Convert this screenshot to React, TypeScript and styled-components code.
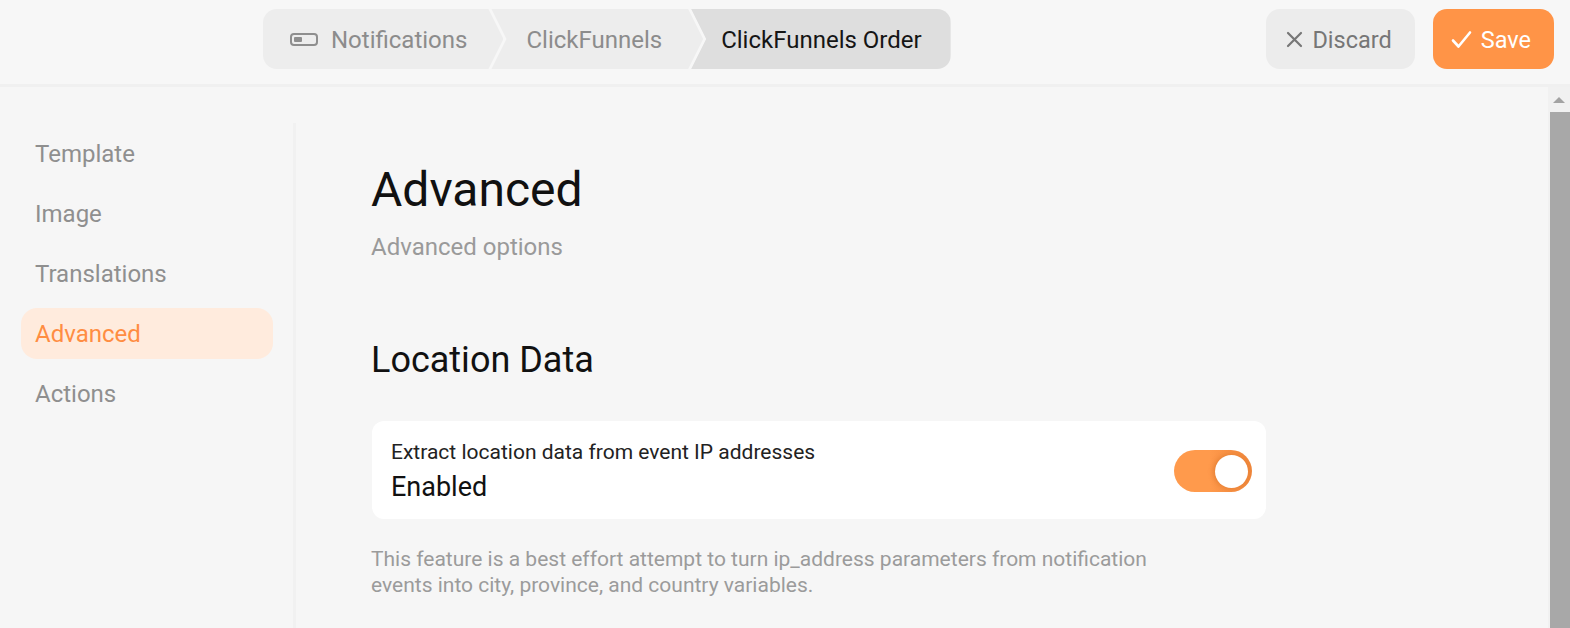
import React from "react";
import styled, { createGlobalStyle } from "styled-components";

const Global = createGlobalStyle`
  html, body { margin: 0; padding: 0; height: 100%; overflow: hidden; }
  body { background: #f6f6f6; font-family: Roboto, "Liberation Sans", sans-serif; color: #111; }
  #root { height: 100%; }
  * { box-sizing: border-box; }
`;

const Page = styled.div`
  display: flex;
  flex-direction: column;
  height: 100vh;
`;

const Header = styled.header`
  display: flex;
  align-items: flex-start;
  height: 87px;
  padding: 9px 16px 0 263px;
  background: #f7f7f7;
  border-bottom: 3px solid #f0f0f0;
  flex-shrink: 0;
`;

const Crumbs = styled.nav`
  display: flex;
  height: 60px;
  border-radius: 14px;
  overflow: hidden;
`;

const Crumb = styled.div<{ $first?: boolean; $last?: boolean; $active?: boolean; $pl: number; $pr: number }>`
  display: flex;
  align-items: center;
  gap: 13px;
  height: 60px;
  padding: 1px ${(p) => p.$pr}px 0 ${(p) => p.$pl}px;
  margin-left: ${(p) => (p.$first ? 0 : -12)}px;
  background: ${(p) => (p.$active ? "#dedede" : "#ededed")};
  color: ${(p) => (p.$active ? "#151515" : "#8c8c8c")};
  font-size: 24px;
  white-space: nowrap;
  clip-path: ${(p) =>
    p.$first
      ? "polygon(0 0, calc(100% - 15px) 0, 100% 50%, calc(100% - 15px) 100%, 0 100%)"
      : p.$last
      ? "polygon(0 0, 100% 0, 100% 100%, 0 100%, 15px 50%)"
      : "polygon(0 0, calc(100% - 15px) 0, 100% 50%, calc(100% - 15px) 100%, 0 100%, 15px 50%)"};
`;

const ToggleIcon = styled.span`
  position: relative;
  display: inline-block;
  width: 28px;
  height: 13px;
  border: 2px solid #8e8e8e;
  border-radius: 4px;
  &::after {
    content: "";
    position: absolute;
    left: 2px;
    top: 2px;
    width: 8px;
    height: 5px;
    background: #8e8e8e;
    border-radius: 1px;
  }
`;

const Actions = styled.div`
  margin-left: auto;
  display: flex;
  gap: 18px;
`;

const Button = styled.button<{ $primary?: boolean }>`
  display: flex;
  align-items: center;
  gap: 9px;
  height: 60px;
  padding: 1px ${(p) => (p.$primary ? 23 : 23)}px 0 ${(p) => (p.$primary ? 18 : 20)}px;
  border: none;
  border-radius: 14px;
  background: ${(p) => (p.$primary ? "#ff9447" : "#ececec")};
  color: ${(p) => (p.$primary ? "#fff" : "#767676")};
  font-family: Roboto, "Liberation Sans", sans-serif;
  font-size: 23.5px;
  cursor: pointer;
`;

const Body = styled.div`
  flex: 1;
  display: flex;
  min-height: 0;
`;

const Sidebar = styled.aside`
  width: 296px;
  flex-shrink: 0;
  margin-top: 36px;
  padding: 5px 20px 0 21px;
  border-right: 3px solid #f1f1f1;
  display: flex;
  flex-direction: column;
  gap: 9px;
`;

const NavItem = styled.div<{ $active?: boolean }>`
  height: 51px;
  line-height: 53px;
  padding-left: 14px;
  border-radius: 16px;
  font-size: 24px;
  color: ${(p) => (p.$active ? "#ff8d42" : "#8f8f8f")};
  background: ${(p) => (p.$active ? "#ffebdd" : "transparent")};
`;

const Content = styled.main`
  flex: 1;
  padding: 74px 0 0 75px;
  min-width: 0;
`;

const Title = styled.h1`
  margin: 0;
  font-size: 48px;
  line-height: 58px;
  font-weight: 400;
  color: #111;
`;

const Subtitle = styled.p`
  margin: 14px 0 0;
  font-size: 24px;
  line-height: 28px;
  color: #9a9a9a;
`;

const SectionTitle = styled.h2`
  margin: 79px 0 0;
  font-size: 36px;
  line-height: 40px;
  font-weight: 400;
  color: #111;
`;

const Card = styled.div`
  margin: 41px 0 0 1px;
  width: 894px;
  height: 98px;
  background: #fff;
  border-radius: 12px;
  display: flex;
  align-items: center;
  padding: 0 14px 0 19px;
`;

const CardText = styled.div`
  flex: 1;
  display: flex;
  flex-direction: column;
  gap: 7px;
  margin-top: 2px;
`;

const CardLabel = styled.div`
  font-size: 21px;
  line-height: 24px;
  color: #222;
`;

const CardValue = styled.div`
  font-size: 27px;
  line-height: 32px;
  color: #111;
`;

const Switch = styled.div<{ $on: boolean }>`
  position: relative;
  width: 78px;
  height: 42px;
  border-radius: 21px;
  background: ${(p) => (p.$on ? "linear-gradient(90deg, #ff9a4c 45%, #ee863a 100%)" : "#ddd")};
  margin-top: 2px;
`;

const Knob = styled.span<{ $on: boolean }>`
  position: absolute;
  top: 4.5px;
  left: ${(p) => (p.$on ? 41 : 4)}px;
  width: 33px;
  height: 33px;
  border-radius: 50%;
  background: #fff;
  box-shadow: -2px 0 5px rgba(190, 90, 20, 0.35);
`;

const Description = styled.p`
  margin: 27px 0 0;
  max-width: 800px;
  font-size: 21px;
  line-height: 26px;
  color: #9b9b9b;
`;

const Scrollbar = styled.div`
  width: 22px;
  flex-shrink: 0;
  background: #f1f1f1;
  display: flex;
  flex-direction: column;
  align-items: flex-end;
`;

const ScrollArrow = styled.div`
  width: 100%;
  height: 25px;
  display: flex;
  justify-content: center;
  align-items: center;
  &::before {
    content: "";
    border-left: 6px solid transparent;
    border-right: 6px solid transparent;
    border-bottom: 6px solid #a3a3a3;
  }
`;

const ScrollThumb = styled.div`
  width: 20px;
  flex: 1;
  background: #a8a8a8;
`;

const XIcon = () => (
  <svg width="17" height="17" viewBox="0 0 17 17" fill="none" stroke="#777" strokeWidth="2.2" strokeLinecap="round">
    <path d="M2 2 L15 15 M15 2 L2 15" />
  </svg>
);

const CheckIcon = () => (
  <svg width="21" height="19" viewBox="0 0 21 19" fill="none" stroke="#fff" strokeWidth="2.6" strokeLinecap="round" strokeLinejoin="round">
    <path d="M2 10.5 L7.5 16.5 L19 2.5" />
  </svg>
);

const navItems = ["Template", "Image", "Translations", "Advanced", "Actions"];

export default function App() {
  return (
    <Page>
      <Global />
      <Header>
        <Crumbs>
          <Crumb $first $pl={27} $pr={36}>
            <ToggleIcon />
            Notifications
          </Crumb>
          <Crumb $pl={35} $pr={41}>ClickFunnels</Crumb>
          <Crumb $last $active $pl={30} $pr={29}>ClickFunnels Order</Crumb>
        </Crumbs>
        <Actions>
          <Button>
            <XIcon />
            Discard
          </Button>
          <Button $primary>
            <CheckIcon />
            Save
          </Button>
        </Actions>
      </Header>
      <Body>
        <Sidebar>
          {navItems.map((n) => (
            <NavItem key={n} $active={n === "Advanced"}>
              {n}
            </NavItem>
          ))}
        </Sidebar>
        <Content>
          <Title>Advanced</Title>
          <Subtitle>Advanced options</Subtitle>
          <SectionTitle>Location Data</SectionTitle>
          <Card>
            <CardText>
              <CardLabel>Extract location data from event IP addresses</CardLabel>
              <CardValue>Enabled</CardValue>
            </CardText>
            <Switch $on>
              <Knob $on />
            </Switch>
          </Card>
          <Description>
            This feature is a best effort attempt to turn ip_address parameters from notification events into city,
            province, and country variables.
          </Description>
        </Content>
        <Scrollbar>
          <ScrollArrow />
          <ScrollThumb />
        </Scrollbar>
      </Body>
    </Page>
  );
}
